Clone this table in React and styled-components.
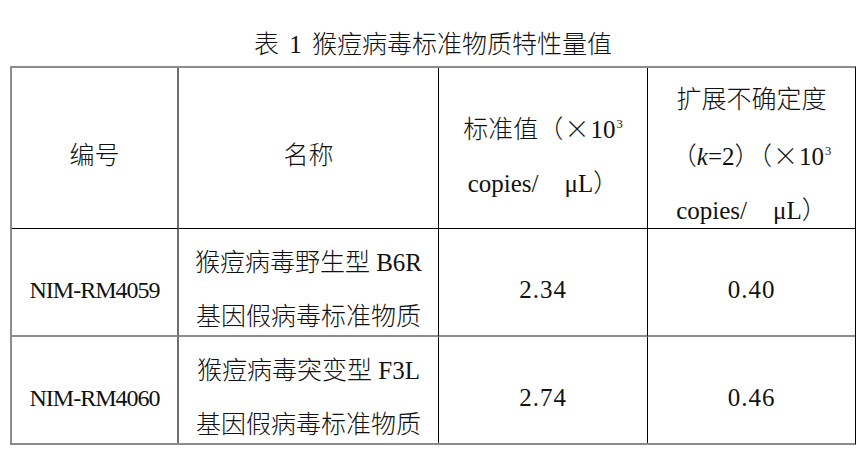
import React from 'react';
import styled, { createGlobalStyle } from 'styled-components';

const GlobalStyle = createGlobalStyle`
  html, body { margin: 0; padding: 0; background: #ffffff; }
  body {
    font-family: "Liberation Serif", "Noto Sans CJK SC", serif;
    color: #111111;
  }
`;

const Page = styled.div`
  width: 866px;
  height: 453px;
  padding-left: 10px;
  box-sizing: border-box;
`;

const Caption = styled.h1`
  margin: 0;
  width: 846px;
  height: 66px;
  padding-top: 31px;
  box-sizing: border-box;
  font-size: 25px;
  line-height: 28px;
  font-weight: 300;
  text-align: center;
  word-spacing: 4px;
  white-space: pre;
`;

const Table = styled.div`
  display: grid;
  grid-template-columns: 167px 260px 209px 207px;
  grid-template-rows: 161px 108px 106px;
  width: 846px;
  box-sizing: border-box;
  border-top: 2px solid #8c8c8c;
  border-left: 2px solid #8c8c8c;
  border-bottom: 2px solid #8c8c8c;
  border-right: 1px solid #000000;
`;

const Cell = styled.div`
  box-sizing: border-box;
  display: flex;
  flex-direction: column;
  align-items: center;
  justify-content: center;
  padding-top: 15px;
  text-align: center;
  font-size: 25px;
  line-height: 54px;
  font-weight: 300;
  white-space: nowrap;
  border-right: ${(p) =>
    p.$col === 3 ? 'none' : p.$col === 0 ? '2px solid #6e6e6e' : '1px solid #000000'};
  border-bottom: ${(p) =>
    p.$rule === 'header' ? '1px solid #000000' : p.$rule === 'row' ? '2px solid #8c8c8c' : 'none'};
`;

const Line = styled.div`
  display: block;
`;

const Code = styled.div`
  font-size: 24px;
  letter-spacing: -1px;
`;

const Num = styled.div`
  font-size: 25px;
  letter-spacing: 1px;
`;

const Times = styled.span`
  font-family: "Noto Sans CJK SC", sans-serif;
  margin: 0 1px;
`;

const Sup = styled.span`
  font-size: 12.5px;
  line-height: 1;
  vertical-align: 10px;
  margin-left: 1px;
`;

const Mu = styled.span`
  padding-left: 26px;
`;

const Italic = styled.i`
  font-style: italic;
`;

const rows = [
  {
    id: 'NIM-RM4059',
    name: ['猴痘病毒野生型 B6R', '基因假病毒标准物质'],
    value: '2.34',
    unc: '0.40',
  },
  {
    id: 'NIM-RM4060',
    name: ['猴痘病毒突变型 F3L', '基因假病毒标准物质'],
    value: '2.74',
    unc: '0.46',
  },
];

const Unit = () => (
  <Line>
    copies/<Mu>μ</Mu>L）
  </Line>
);

export default function App() {
  return (
    <>
      <GlobalStyle />
      <Page>
        <Caption>表 1 猴痘病毒标准物质特性量值</Caption>
        <Table role="table">
          <Cell $col={0} $rule="header">
            <Line>编号</Line>
          </Cell>
          <Cell $col={1} $rule="header">
            <Line>名称</Line>
          </Cell>
          <Cell $col={2} $rule="header">
            <Line>
              标准值（<Times>×</Times>10<Sup>3</Sup>
            </Line>
            <Unit />
          </Cell>
          <Cell $col={3} $rule="header">
            <Line>扩展不确定度</Line>
            <Line>
              （<Italic>k</Italic>=2）（<Times>×</Times>10<Sup>3</Sup>
            </Line>
            <Unit />
          </Cell>
          {rows.map((r, i) => {
            const rule = i === rows.length - 1 ? 'none' : 'row';
            return (
              <React.Fragment key={r.id}>
                <Cell $col={0} $rule={rule}>
                  <Code>{r.id}</Code>
                </Cell>
                <Cell $col={1} $rule={rule}>
                  {r.name.map((n) => (
                    <Line key={n}>{n}</Line>
                  ))}
                </Cell>
                <Cell $col={2} $rule={rule}>
                  <Num>{r.value}</Num>
                </Cell>
                <Cell $col={3} $rule={rule}>
                  <Num>{r.unc}</Num>
                </Cell>
              </React.Fragment>
            );
          })}
        </Table>
      </Page>
    </>
  );
}
